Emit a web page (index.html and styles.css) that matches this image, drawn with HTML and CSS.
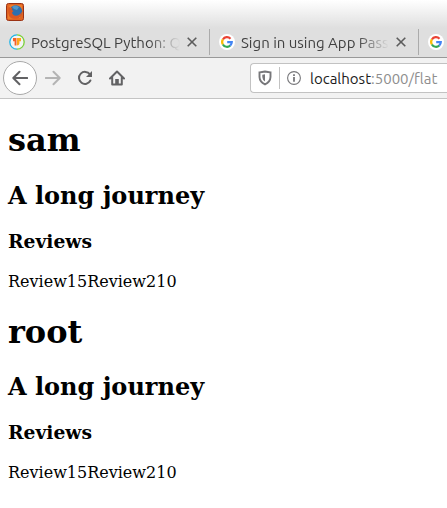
FILE: index.html
```html
<!DOCTYPE html>
<html lang="en">
<head>
<meta charset="utf-8">
<title>localhost:5000/flat</title>
<link rel="stylesheet" href="styles.css">
</head>
<body>
<svg class="defs" aria-hidden="true">
  <symbol id="google" viewBox="0 0 16 16">
    <circle cx="8" cy="8" r="8" fill="#fff"/>
    <g fill="none" stroke-width="2.2">
      <path d="M3.9 5.5A4.8 4.8 0 0 1 11.5 4.7" stroke="#ea4335"/>
      <path d="M3.9 5.4A4.8 4.8 0 0 0 3.9 10.5" stroke="#fbbc05"/>
      <path d="M3.9 10.5A4.8 4.8 0 0 0 11.3 11.5" stroke="#34a853"/>
      <path d="M8.2 8.1H12.8A4.8 4.8 0 0 1 11.2 11.6" stroke="#4285f4"/>
    </g>
  </symbol>
  <symbol id="close" viewBox="0 0 12 12">
    <path d="M1.7 1.7L10.3 10.3M10.3 1.7L1.7 10.3" fill="none" stroke="#5c5c5c" stroke-width="1.6"/>
  </symbol>
</svg>
<header class="browser">
  <div class="titlebar">
    <svg class="firefox" viewBox="0 0 18 18" aria-hidden="true">
      <rect x=".5" y=".5" width="17" height="17" rx="2" fill="#e06420" stroke="#9b3214"/>
      <path d="M2 16V3L5 2H16V6L14 15Z" fill="#ee7b2a"/>
      <circle cx="9.8" cy="8.6" r="6.4" fill="#2c6fae"/>
      <path d="M6 4Q9 1 13 4L11 7 8 6Z" fill="#4f97cb"/>
      <path d="M2.4 3L4.2 5Q5.5 4.4 6.5 5L5.8 7 7.6 8 6 9.5Q6.5 12.6 10 12.8 14 12.6 16 8.5 16 13 12.5 15 8 17 4.3 14.4 1.2 11.5 2.4 3Z" fill="#db5821"/>
    </svg>
  </div>
  <nav class="tabs" aria-label="Tabs">
    <div class="tab">
      <svg class="favicon" viewBox="0 0 16 16" aria-hidden="true">
        <circle cx="8" cy="8" r="7" fill="#f4f4f4"/>
        <path d="M8 .8A7.2 7.2 0 0 0 8 15.2" fill="none" stroke="#1fb5e8" stroke-width="1.3"/>
        <path d="M8 .8A7.2 7.2 0 0 1 8 15.2" fill="none" stroke="#7bd13a" stroke-width="1.3"/>
        <path d="M4 4H7.5V11.5H5.6V7.2H4Z" fill="#f4602a"/>
        <path d="M8 4H12V7.2H10.4V9.8Q10 11.2 8 11.5Z" fill="#ffa51a"/>
      </svg>
      <span class="label">PostgreSQL Python: Q</span>
      <button class="close" aria-label="Close tab"><svg><use href="#close"/></svg></button>
    </div>
    <div class="tab">
      <svg class="favicon" aria-hidden="true"><use href="#google"/></svg>
      <span class="label">Sign in using App Passw</span>
      <button class="close" aria-label="Close tab"><svg><use href="#close"/></svg></button>
    </div>
    <div class="tab">
      <svg class="favicon" aria-hidden="true"><use href="#google"/></svg>
    </div>
  </nav>
  <div class="toolbar">
    <button class="tool back" aria-label="Back">
      <svg viewBox="0 0 16 16"><path d="M15.2 8H1.5M7.5 1.8L1.3 8 7.5 14.2"/></svg>
    </button>
    <button class="tool forward" aria-label="Forward" disabled>
      <svg viewBox="0 0 16 16"><path d="M.8 8H14.5M8.5 1.8L14.7 8 8.5 14.2"/></svg>
    </button>
    <button class="tool" aria-label="Reload">
      <svg viewBox="0 0 16 16"><path d="M12.9 4.4A6 6 0 1 0 13.4 10.5"/><path d="M15 1V7H9Z" class="solid"/></svg>
    </button>
    <button class="tool" aria-label="Home">
      <svg viewBox="0 0 16 16"><path d="M1 8.5L8 1.5 15 8.5M3.2 7.5V14.5H12.8V7.5"/><path d="M6.2 14V9H9.8V14Z" class="solid"/></svg>
    </button>
    <div class="address">
      <svg class="shield" viewBox="0 0 14 16" aria-hidden="true">
        <path d="M7 1.5Q10 2.2 12.5 2.4V7Q12.3 12 7 14.4 1.7 12 1.5 7V2.4Q4 2.2 7 1.5Z" fill="none" stroke="#77777a" stroke-width="1.9"/>
        <path d="M7 4.3V11.6Q4.5 10 4.3 7V4.7Z" fill="#77777a"/>
      </svg>
      <svg class="info" viewBox="0 0 14 14" aria-hidden="true">
        <circle cx="7" cy="7" r="6.4" fill="none" stroke="#77777a" stroke-width="1.1"/>
        <path d="M6.1 3.3H7.9V5H6.1ZM6.1 6.1H7.9V10.7H6.1Z" fill="#77777a"/>
      </svg>
      <a class="url" href="#"><span class="host">localhost</span>:5000/flat</a>
    </div>
  </div>
</header>
<main>
  <h1>sam</h1>
  <h2>A long journey</h2>
  <h3>Reviews</h3>
  <p>Review15Review210</p>
  <h1>root</h1>
  <h2>A long journey</h2>
  <h3>Reviews</h3>
  <p>Review15Review210</p>
</main>
</body>
</html>
```
FILE: styles.css
```css
* { box-sizing: border-box; }

body {
  margin: 0;
  background: #fff;
  color: #000;
  font-family: "DejaVu Serif", serif;
  font-size: 16px;
}

svg { display: block; }

.defs { display: none; }

.browser {
  overflow: hidden;
  background: linear-gradient(#fff 0, #dfdfdf 28px);
  font-family: Ubuntu, "Noto Sans", sans-serif;
  font-size: 15px;
  color: #404040;
}

.titlebar {
  height: 27px;
  padding: 3px 6px;
}

.firefox { width: 18px; height: 18px; }

.tabs {
  display: flex;
  height: 31px;
  border-bottom: 1px solid #999;
}

.tab {
  flex: none;
  display: flex;
  align-items: center;
  gap: 6px;
  width: 209px;
  padding: 0 11px 0 9px;
}

.tab + .tab {
  border-left: 1px solid;
  border-image: linear-gradient(transparent 3px, #ababab 3px, #ababab 27px, transparent 27px) 1;
}

.favicon { flex: none; width: 16px; height: 16px; }

.label {
  flex: 1;
  min-width: 0;
  white-space: nowrap;
  mask-image: linear-gradient(to right, #000 calc(100% - 32px), transparent);
}

button {
  flex: none;
  padding: 0;
  border: 0;
  background: none;
}

.close svg { width: 12px; height: 12px; }

.toolbar {
  display: flex;
  align-items: center;
  height: 41px;
  padding-left: 3px;
  background: #f2f2f2;
  border-bottom: 1px solid #c4c4c4;
}

.tool {
  display: grid;
  place-items: center;
  width: 32px;
  height: 34px;
}

.tool svg {
  width: 16px;
  height: 16px;
  fill: none;
  stroke: #626264;
  stroke-width: 2;
  stroke-linecap: round;
  stroke-linejoin: round;
}

.tool .solid { fill: #626264; stroke: none; }

.back {
  width: 34px;
  border: 1px solid #a9a9a9;
  border-radius: 50%;
  background: #fff;
}

.forward svg { stroke: #b4b4b4; }

.address {
  flex: 1;
  display: flex;
  align-items: center;
  height: 30px;
  margin-left: 117px;
  padding-left: 7px;
  border: 1px solid #c2c2c2;
  border-right: 0;
  border-radius: 4px 0 0 4px;
  background: #fff;
  white-space: nowrap;
}

.shield { flex: none; width: 14px; height: 16px; }

.info {
  flex: none;
  box-sizing: content-box;
  width: 14px;
  height: 14px;
  margin: 0 9px 0 7px;
  padding: 4px 0 4px 7px;
  border-left: 1px solid #c2c2c2;
}

.url { color: #8e8e8e; text-decoration: none; }

.host { color: #1c1c1c; }

main { padding: 1px 8px 0; }

p { line-height: 21px; }
```
